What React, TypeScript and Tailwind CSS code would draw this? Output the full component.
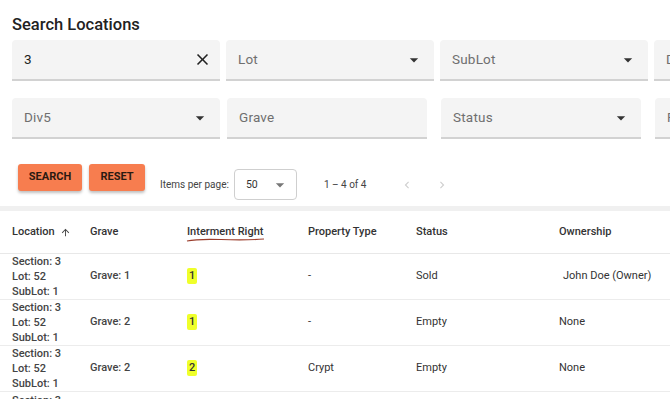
import React from "react";

const font = { fontFamily: "Roboto, 'Liberation Sans', sans-serif" };

const ArrowDrop = ({ className = "" }: { className?: string }) => (
  <svg className={className} width="20" height="20" viewBox="0 0 24 24" fill="currentColor">
    <path d="M7 10l5 5 5-5z" />
  </svg>
);

const Field = ({
  label,
  value,
  width,
  select,
  clear,
}: {
  label?: string;
  value?: string;
  width: string;
  select?: boolean;
  clear?: boolean;
}) => (
  <div
    className={`${width} h-[41px] shrink-0 bg-[#f4f4f4] rounded-t-[4px] border-b-[2px] border-[#d2d2d2] flex items-center pl-3 pr-[10px]`}
  >
    <span className={`flex-1 text-[13.5px] tracking-[0.2px] ${value ? "text-[#222]" : "text-[#6f6f6f]"}`}>
      {value ?? label}
    </span>
    {select && <ArrowDrop className="text-[#333]" />}
    {clear && (
      <svg className="mr-[-2px]" width="19" height="19" viewBox="0 0 24 24" fill="#222">
        <path d="M19 6.41 17.59 5 12 10.59 6.41 5 5 6.41 10.59 12 5 17.59 6.41 19 12 13.41 17.59 19 19 17.59 13.41 12z" />
      </svg>
    )}
  </div>
);

const rows = [
  { grave: "Grave: 1", right: "1", type: "-", status: "Sold", owner: "John Doe (Owner)", ownerPad: true },
  { grave: "Grave: 2", right: "1", type: "-", status: "Empty", owner: "None" },
  { grave: "Grave: 2", right: "2", type: "Crypt", status: "Empty", owner: "None" },
];

const cols = "grid grid-cols-[78px_97px_121px_108px_143px_1fr]";

export default function App() {
  return (
    <div className="w-[670px] h-[399px] overflow-hidden bg-white" style={font}>
      {/* Search form */}
      <div className="px-3 pt-[15px]">
        <h1 className="text-[16.5px] font-medium text-[#222] leading-[20px]">Search Locations</h1>
        <div className="flex gap-[6px] mt-[5px] w-[900px]">
          <Field width="w-[208px]" value="3" clear />
          <Field width="w-[208px]" label="Lot" select />
          <Field width="w-[208px]" label="SubLot" select />
          <Field width="w-[208px]" label="Div4" select />
        </div>
        <div className="flex mt-[17px] w-[900px]">
          <Field width="w-[208px]" label="Div5" select />
          <div className="w-[7px]" />
          <Field width="w-[200px]" label="Grave" />
          <div className="w-[14px]" />
          <Field width="w-[200px]" label="Status" select />
          <div className="w-[14px]" />
          <Field width="w-[200px]" label="Property Type" />
        </div>

        {/* Actions + paginator */}
        <div className="flex items-start mt-[25px] pl-[6px] h-[37px]">
          <button className="h-[27px] w-[64px] bg-[#f77d4f] rounded-[3px] shadow-[0_2px_3px_rgba(0,0,0,0.25)] text-[11px] font-bold text-[#2a1a12]">
            SEARCH
          </button>
          <button className="ml-[7px] h-[27px] w-[56px] bg-[#f77d4f] rounded-[3px] shadow-[0_2px_3px_rgba(0,0,0,0.25)] text-[11px] font-bold text-[#2a1a12]">
            RESET
          </button>
          <div className="flex items-center mt-[5px] ml-[15px] text-[10px] text-[#444]">
            <span>Items per page:</span>
            <div className="ml-[5px] w-[63px] h-[31px] border border-[#cfcfcf] rounded-[4px] flex items-center pl-[11px] pr-[6px]">
              <span className="flex-1 text-[10.5px] text-[#333]">50</span>
              <ArrowDrop className="text-[#777]" />
            </div>
            <span className="ml-[27px] text-[10px] text-[#444]">1 – 4 of 4</span>
            <svg className="ml-[34px]" width="14" height="14" viewBox="0 0 24 24" fill="#cfcfcf">
              <path d="M15.41 7.41 14 6l-6 6 6 6 1.41-1.41L10.83 12z" />
            </svg>
            <svg className="ml-[21px]" width="14" height="14" viewBox="0 0 24 24" fill="#cfcfcf">
              <path d="M10 6 8.59 7.41 13.17 12l-4.58 4.59L10 18l6-6z" />
            </svg>
          </div>
        </div>
      </div>

      {/* Separator band */}
      <div className="mt-[5px] h-[5px] bg-[#f0f0f0]" />

      {/* Table */}
      <div className="text-[11px]">
        <div className={`${cols} h-[43px] items-center pl-3 border-b border-[#e8e8e8] font-medium text-[#333]`}>
          <div className="flex items-center gap-[5px]">
            Location
            <svg width="11" height="11" viewBox="0 0 24 24" fill="#444">
              <path d="m4 12 1.41 1.41L11 7.83V20h2V7.83l5.58 5.59L20 12l-8-8-8 8z" />
            </svg>
          </div>
          <div>Grave</div>
          <div className="relative">
            Interment Right
            <svg className="absolute left-[-1px] top-[13px]" width="80" height="6" viewBox="0 0 80 6">
              <path d="M1 4 C 10 2, 20 2, 35 2.5 S 65 3, 78 2" stroke="#9a3d2c" strokeWidth="1.2" fill="none" />
            </svg>
          </div>
          <div>Property Type</div>
          <div>Status</div>
          <div>Ownership</div>
        </div>
        {rows.map((r, i) => (
          <div key={i} className={`${cols} h-[46px] items-center pl-3 border-b border-[#ececec] text-[#333]`}>
            <div className="leading-[15px] font-medium text-[#444]">
              <div>Section: 3</div>
              <div>Lot: 52</div>
              <div>SubLot: 1</div>
            </div>
            <div className="font-medium text-[#444]">{r.grave}</div>
            <div>
              <span className="inline-block bg-[#efff2a] px-[2px] rounded-[2px] leading-[16px] font-medium text-[#333]">
                {r.right}
              </span>
            </div>
            <div>{r.type}</div>
            <div>{r.status}</div>
            <div className={r.ownerPad ? "pl-[4px]" : ""}>{r.owner}</div>
          </div>
        ))}
        <div className="pl-3 pt-[1px] leading-[15px] font-medium text-[#444]">Section: 3</div>
      </div>
    </div>
  );
}
